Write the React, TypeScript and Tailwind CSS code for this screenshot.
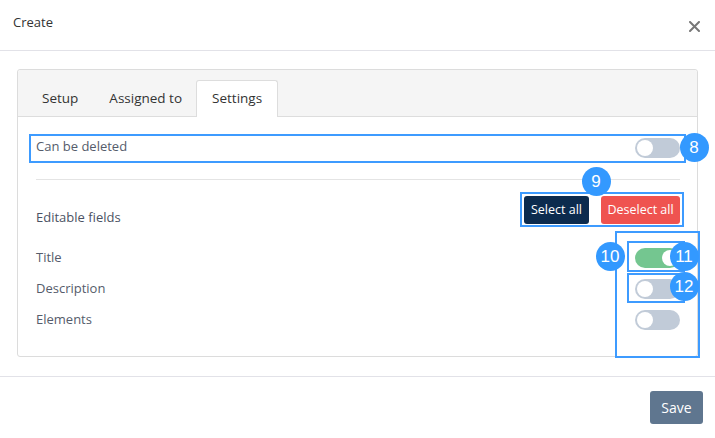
import React from "react";

function Toggle({ on = false }: { on?: boolean }) {
  return (
    <div
      className={
        "relative h-[20px] w-[45px] rounded-full " +
        (on ? "bg-[#74c690]" : "bg-[#c1cbd8]")
      }
    >
      <div
        className={
          "absolute top-[2px] h-[16px] w-[16px] rounded-full bg-white " +
          (on ? "right-[2px]" : "left-[2px]")
        }
      />
    </div>
  );
}

function Badge({ n, x, y }: { n: string; x: number; y: number }) {
  return (
    <div
      className="absolute flex h-[29px] w-[29px] items-center justify-center rounded-full bg-[#3399ff] text-[17px] leading-none text-white"
      style={{ left: x - 14.5, top: y - 14.5, fontFamily: '"Liberation Sans", Arial, sans-serif' }}
    >
      {n}
    </div>
  );
}

function Box({ x1, y1, x2, y2 }: { x1: number; y1: number; x2: number; y2: number }) {
  return (
    <div
      className="pointer-events-none absolute border-2 border-[#3d9bff]"
      style={{ left: x1, top: y1, width: x2 - x1, height: y2 - y1 }}
    />
  );
}

export default function App() {
  const fields = [
    { label: "Title", on: true },
    { label: "Description", on: false },
    { label: "Elements", on: false },
  ];
  return (
    <div
      className="relative h-[438px] w-[715px] overflow-hidden bg-white text-[#333]"
      style={{ fontFamily: '"Open Sans", "Noto Sans", sans-serif' }}
    >
      {/* Header */}
      <div className="flex h-[51px] items-start justify-between border-b border-[#e2e2e8] pl-[13px] pr-[15px]">
        <div className="pt-[13px] text-[13px] leading-[18px] text-[#333]">Create</div>
        <svg className="mt-[21px]" width="11" height="11" viewBox="0 0 11 11">
          <path d="M1 1 L10 10 M10 1 L1 10" stroke="#777" strokeWidth="2" strokeLinecap="round" />
        </svg>
      </div>

      {/* Body */}
      <div className="px-[17px] pt-[18px] pb-[19px] border-b border-[#e2e2e8]">
        <div className="rounded-[3px] border border-[#dcdcdc]">
          {/* Tabs */}
          <div className="flex h-[47px] items-end border-b border-[#dddddd] bg-[#f5f5f5] pl-[8px] rounded-t-[3px]">
            <div className="flex h-[36px] items-center px-[16px] text-[13.5px] text-[#333]">Setup</div>
            <div className="-ml-px flex h-[36px] items-center px-[16px] text-[13.5px] text-[#333]">Assigned to</div>
            <div className="-mb-px -ml-[2px] flex h-[37px] items-center rounded-t-[3px] border border-b-0 border-[#dddddd] bg-white px-[15px] pb-px text-[13.5px] text-[#333]">
              Settings
            </div>
          </div>

          {/* Content */}
          <div className="pl-[18px] pr-[17px] pt-[21px] pb-[21px]">
            <div className="flex h-[20px] items-center justify-between">
              <span className="-mt-[3px] text-[13px] text-[#555c6b]">Can be deleted</span>
              <Toggle />
            </div>

            <div className="mt-[21px] border-t border-[#e4e4e4]" />

            <div className="mt-[16px] flex h-[28px] items-center justify-between">
              <span className="mt-[16px] text-[13px] font-medium text-[#4b5263]">Editable fields</span>
              <div className="flex gap-[12px]">
                <button className="h-[28px] w-[65px] rounded-[3px] bg-[#0c2b4e] text-[12.5px] text-white">
                  Select all
                </button>
                <button className="h-[28px] w-[79px] rounded-[3px] bg-[#ef5350] text-[12.5px] text-white">
                  Deselect all
                </button>
              </div>
            </div>

            <div className="mt-[18px] flex flex-col">
              {fields.map((f) => (
                <div key={f.label} className="flex h-[31px] items-center justify-between">
                  <span className="text-[13px] text-[#555c6b]">{f.label}</span>
                  <Toggle on={f.on} />
                </div>
              ))}
            </div>
          </div>
        </div>
      </div>

      {/* Footer */}
      <div className="flex justify-end pr-[12px] pt-[14px]">
        <button className="h-[33px] w-[53px] rounded-[3px] bg-[#5f768f] text-[14px] text-white">Save</button>
      </div>

      {/* Annotations */}
      <Box x1={29} y1={134} x2={686} y2={163} />
      <Box x1={520} y1={192} x2={684} y2={227} />
      <Box x1={615} y1={231} x2={700} y2={358} />
      <Box x1={627} y1={241} x2={685} y2={272} />
      <Box x1={627} y1={273} x2={685} y2={303} />
      <Badge n="8" x={694} y={147} />
      <Badge n="9" x={596} y={181} />
      <Badge n="10" x={610} y={256} />
      <Badge n="11" x={684} y={256} />
      <Badge n="12" x={684} y={286} />
    </div>
  );
}
